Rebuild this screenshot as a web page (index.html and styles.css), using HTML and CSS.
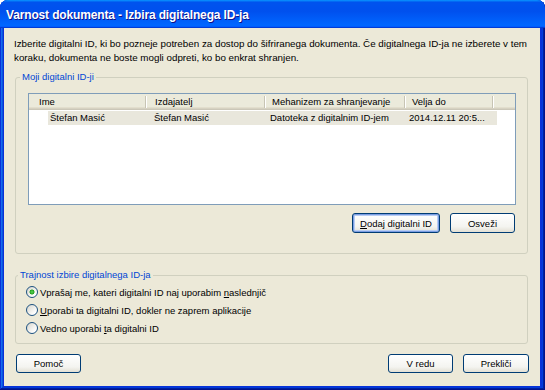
FILE: index.html
```html
<!DOCTYPE html>
<html lang="sl">
<head>
    <meta charset="UTF-8">
    <title>Varnost dokumenta - Izbira digitalnega ID-ja</title>
    <link rel="stylesheet" href="styles.css">
</head>
<body>
    <div class="window">
        <div class="titlebar">
            <span class="title">Varnost dokumenta - Izbira digitalnega ID-ja</span>
        </div>
        <div class="client">
            <p class="intro">
                Izberite digitalni ID, ki bo pozneje potreben za dostop do šifriranega dokumenta. Če digitalnega ID-ja ne izberete v tem
                koraku, dokumenta ne boste mogli odpreti, ko bo enkrat shranjen.
            </p>

            <fieldset class="group group-ids">
                <legend>Moji digitalni ID-ji</legend>
                <div class="listview">
                    <div class="lv-header">
                        <div class="lv-col c1">Ime</div>
                        <div class="lv-col c2">Izdajatelj</div>
                        <div class="lv-col c3">Mehanizem za shranjevanje</div>
                        <div class="lv-col c4">Velja do</div>
                        <div class="lv-col filler"></div>
                    </div>
                    <div class="lv-row selected">
                        <div class="lv-cell r1">Štefan Masić</div>
                        <div class="lv-cell r2">Štefan Masić</div>
                        <div class="lv-cell r3">Datoteka z digitalnim ID-jem</div>
                        <div class="lv-cell r4">2014.12.11 20:5...</div>
                    </div>
                </div>
                <div class="group-buttons">
                    <button class="btn btn-default btn-add"><u>D</u>odaj digitalni ID</button>
                    <button class="btn btn-refresh">Osveži</button>
                </div>
            </fieldset>

            <fieldset class="group group-persist">
                <legend>Trajnost izbire digitalnega ID-ja</legend>
                <label class="radio-row">
                    <span class="radio checked"></span>
                    <span>Vprašaj me, kateri digitalni ID naj uporabim <u>n</u>aslednjič</span>
                </label>
                <label class="radio-row">
                    <span class="radio"></span>
                    <span><u>U</u>porabi ta digitalni ID, dokler ne zaprem aplikacije</span>
                </label>
                <label class="radio-row">
                    <span class="radio"></span>
                    <span>Vedno uporabi <u>t</u>a digitalni ID</span>
                </label>
            </fieldset>

            <div class="dialog-buttons">
                <button class="btn btn-help">Pomoč</button>
                <div class="spacer"></div>
                <button class="btn btn-ok">V redu</button>
                <button class="btn btn-cancel">Prekliči</button>
            </div>
        </div>
    </div>
</body>
</html>
```

FILE: styles.css
```css
body {
    margin: 0;
    background: #fff;
    font-family: "Liberation Sans", Arial, sans-serif;
    font-size: 9.5px;
    color: #000;
}
.window {
    width: 545px;
    height: 390px;
    display: flex;
    flex-direction: column;
    background: #0831d9;
    border-radius: 8px 8px 0 0;
    box-shadow: inset -1px -1px #00138c, inset 1px 1px #0831d9,
                inset -2px -2px #001ea0, inset 2px 2px #166aee,
                inset -3px -3px #003bda, inset 3px 3px #0855dd;
}
.titlebar {
    height: 28px;
    flex: none;
    box-sizing: border-box;
    display: flex;
    align-items: center;
    padding: 1px 6px 0;
    border-radius: 8px 8px 0 0;
    background: linear-gradient(180deg, #0997ff, #0053ee 8%, #0050ee 40%, #0066ff 88%, #0066ff 93%, #005bff 95%, #003dd7 96%, #003dd7);
}
.title {
    color: #fff;
    font-weight: bold;
    font-size: 12px;
    letter-spacing: -0.15px;
    text-shadow: 1px 1px #0f1089;
}
.client {
    flex: 1;
    margin: 0 5px 4px 4px;
    background: #ece9d8;
    display: flex;
    flex-direction: column;
}
.intro {
    margin: 9px 10px 0;
    font-size: 9.8px;
    line-height: 14px;
}
.group {
    margin: 6px 12px 0 11px;
    border: 1px solid #d0d0bf;
    border-radius: 3px;
    min-width: 0;
}
.group legend {
    padding: 0 2px;
    margin-left: -8px;
    line-height: 12px;
    color: #0046d5;
}
.group-ids {
    padding: 10px 11px 20px 12px;
}
.listview {
    height: 112px;
    box-sizing: border-box;
    border: 1px solid #7f9db9;
    background: #fff;
}
.lv-header {
    display: flex;
    height: 16px;
    background: #ebeadb;
    box-shadow: inset 0 -1px #cbc7b8, inset 0 -2px #d6d2c2, inset 0 -3px #e2decd;
}
.lv-col {
    box-sizing: border-box;
    padding-left: 7px;
    line-height: 15px;
    white-space: nowrap;
    background: linear-gradient(90deg, #c7c4b4 1px, #fff 1px) no-repeat right 1px top 2px / 2px 12px;
}
.lv-col.c1 { width: 119px; padding-left: 10px; }
.lv-col.c2 { width: 119px; }
.lv-col.c3 { width: 140px; padding-left: 5px; }
.lv-col.c4 { width: 88px; padding-left: 5px; }
.lv-col.filler { flex: 1; background: none; }
.lv-row {
    display: flex;
    width: 449px;
    height: 14px;
    margin: 1px 0 0 19px;
    line-height: 14px;
}
.lv-row.selected {
    background: #e9e7dc;
}
.lv-cell {
    box-sizing: border-box;
    white-space: nowrap;
    overflow: hidden;
}
.lv-cell.r1 { width: 100px; padding-left: 2px; }
.lv-cell.r2 { width: 119px; padding-left: 6px; }
.lv-cell.r3 { width: 140px; padding-left: 3px; }
.lv-cell.r4 { width: 90px; padding-left: 2px; }
.group-buttons {
    display: flex;
    justify-content: flex-end;
    gap: 10px;
    margin: 8px 1px 0 0;
}
.btn {
    height: 20px;
    box-sizing: border-box;
    padding: 0;
    border: 1px solid #003c74;
    border-radius: 3px;
    background: linear-gradient(180deg, #fff, #f4f4f0 70%, #e3e0d4);
    font: inherit;
    color: #000;
}
.btn-default {
    box-shadow: inset 0 0 0 1px #7b9de3, inset 0 0 0 2px #b8cdf3;
}
.btn-add { width: 88px; }
.btn-refresh { width: 65px; }
.group-persist {
    margin-top: 15px;
    padding: 2px 10px 6px 10px;
}
.radio-row {
    display: flex;
    align-items: center;
    gap: 2px;
    height: 18px;
}
.radio {
    width: 12px;
    height: 12px;
    box-sizing: border-box;
    flex: none;
    border: 1px solid #1c5180;
    border-radius: 50%;
    background: linear-gradient(135deg, #d6d5cc, #fff 80%);
}
.radio.checked {
    background: radial-gradient(circle, #5ed35a 0, #21a121 2.2px, transparent 2.8px),
                linear-gradient(135deg, #d6d5cc, #fff 80%);
}
.dialog-buttons {
    display: flex;
    gap: 10px;
    margin: 10px 11px 0 12px;
}
.dialog-buttons .btn {
    height: 19px;
    width: 65px;
}
.dialog-buttons .btn-cancel { width: 66px; }
.spacer { flex: 1; }
```
